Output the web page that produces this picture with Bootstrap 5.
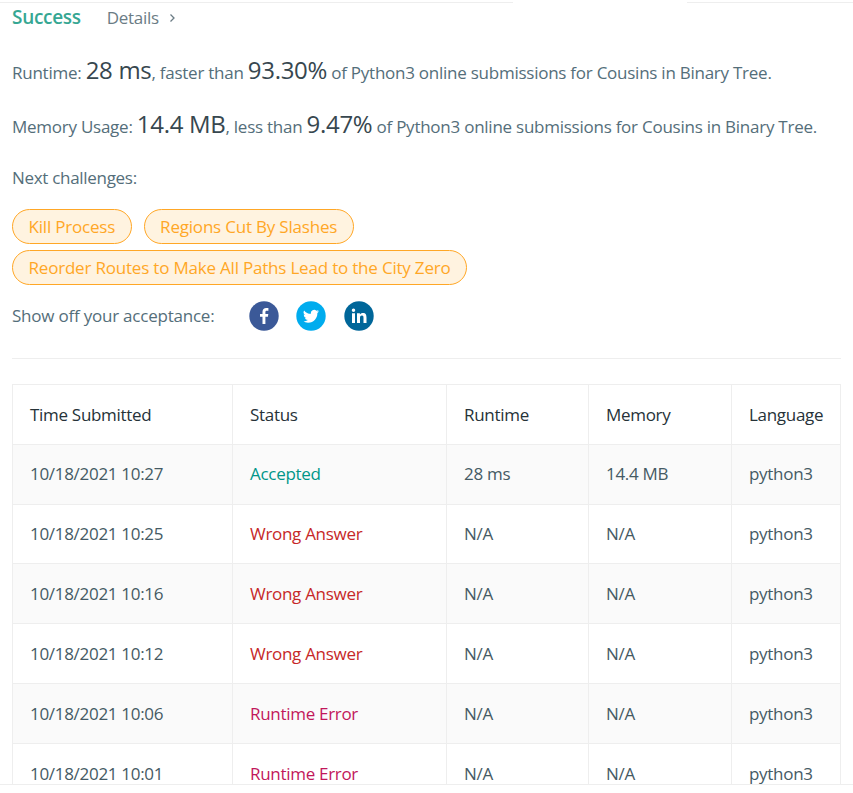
<!DOCTYPE html>
<html lang="en">
<head>
<meta charset="utf-8">
<title>Submission result</title>
<link rel="stylesheet" href="https://cdn.jsdelivr.net/npm/bootstrap@5.3.0/dist/css/bootstrap.min.css">
<style>
html,body{height:100%;overflow:hidden;background:#fff}
body{font-family:"Open Sans","Noto Sans",sans-serif;color:#546e7a;font-size:17px;letter-spacing:-.3px}
.tabline{height:3px;display:flex}
.tabline span{border-top:1px solid #eee;margin-top:2px}
.tl-a{width:513px}.tl-b{width:174px;border-top:0!important}.tl-c{flex:1}
.sheet{height:782px;overflow:hidden;border-bottom:1px solid #eee;padding:0 12px}
.headrow{height:29px;align-items:center;gap:26px}
.succ{color:#36a793;font-weight:600;font-size:19px}
.dets{color:#6b7c85;font-size:17px;gap:10px}
.statline{margin:0;height:54px;line-height:54px;white-space:nowrap;letter-spacing:-.25px}
.statline b{font-weight:400;font-size:24px;color:#37474f;letter-spacing:-.3px}
.statfirst{margin-top:11px}
.nxt{margin:0;height:49px;line-height:49px;margin-top:2px}
.pillwrap{margin-top:7px;row-gap:6px;column-gap:12px;max-width:700px}
.pilla{height:35px;line-height:33px;padding:0 15.5px;border:1px solid #ffa726;border-radius:18px;background:#fff3e0;color:#ffa726;font-size:17px;letter-spacing:-.2px;text-decoration:none;white-space:nowrap}
.sharerow{height:30px;margin-top:16px;align-items:center}
.sharelab{width:237px;letter-spacing:-.22px}
.icons{gap:17px}
.icon-last{margin-left:1px}
.rule{height:1px;background:#eee;margin-top:27px;margin-bottom:25px}
.subs{table-layout:fixed;width:828px;border-collapse:collapse;margin:0;--bs-table-bg:transparent;--bs-table-striped-bg:#fafafa}
.subs th,.subs td{border:1px solid #eee;height:59.83px;padding:0 17px;vertical-align:middle;font-weight:400;color:#455a64;white-space:nowrap;box-shadow:none}
.subs th{color:#263238}
.subs tbody tr:nth-child(odd) td{background:#fafafa}
.subs .acc{color:#009688}
.subs .wa{color:#c62828}
.subs .re{color:#c2185b}
</style>
</head>
<body>
<div class="tabline"><span class="tl-a"></span><span class="tl-b"></span><span class="tl-c"></span></div>
<div class="sheet">
  <div class="d-flex headrow">
    <span class="succ">Success</span>
    <span class="dets d-flex align-items-center">Details
      <svg width="7" height="10" viewBox="0 0 7 10" fill="none" stroke="#6b7c85" stroke-width="1.3"><path d="M1.5 1.5 5 5 1.5 8.5"/></svg>
    </span>
  </div>
  <p class="statline statfirst">Runtime: <b>28 ms</b>, faster than <b>93.30%</b> of Python3 online submissions for Cousins in Binary Tree.</p>
  <p class="statline">Memory Usage: <b>14.4 MB</b>, less than <b>9.47%</b> of Python3 online submissions for Cousins in Binary Tree.</p>
  <p class="nxt">Next challenges:</p>
  <div class="d-flex flex-wrap pillwrap">
    <a class="pilla" href="#">Kill Process</a>
    <a class="pilla" href="#">Regions Cut By Slashes</a>
    <a class="pilla" href="#">Reorder Routes to Make All Paths Lead to the City Zero</a>
  </div>
  <div class="d-flex sharerow">
    <span class="sharelab">Show off your acceptance:</span>
    <div class="d-flex icons">
      <svg width="30" height="30" viewBox="0 0 30 30" role="img" aria-label="Facebook"><circle cx="15" cy="15" r="14.7" fill="#3b5998"/><path fill="#fff" d="M16.4 23v-7.2h2.5l.4-2.9h-2.9v-1.8c0-.8.3-1.4 1.5-1.4h1.5V7.1c-.3 0-1.2-.1-2.2-.1-2.2 0-3.7 1.3-3.7 3.8v2.1h-2.5v2.9h2.5V23z"/></svg>
      <svg width="30" height="30" viewBox="0 0 30 30" role="img" aria-label="Twitter"><circle cx="15" cy="15" r="14.7" fill="#00acee"/><g transform="translate(7 6.8)"><path fill="#fff" d="M5.026 15c6.038 0 9.341-5.003 9.341-9.334 0-.14 0-.282-.006-.422A6.685 6.685 0 0 0 16 3.542a6.658 6.658 0 0 1-1.889.518 3.301 3.301 0 0 0 1.447-1.817 6.533 6.533 0 0 1-2.087.793A3.286 3.286 0 0 0 7.875 6.03a9.325 9.325 0 0 1-6.767-3.429 3.289 3.289 0 0 0 1.018 4.382A3.323 3.323 0 0 1 .64 6.575v.045a3.288 3.288 0 0 0 2.632 3.218 3.203 3.203 0 0 1-.865.115 3.23 3.23 0 0 1-.614-.057 3.283 3.283 0 0 0 3.067 2.277A6.588 6.588 0 0 1 .78 13.58a6.32 6.32 0 0 1-.78-.045A9.344 9.344 0 0 0 5.026 15z"/></g></svg>
      <svg class="icon-last" width="30" height="30" viewBox="0 0 30 30" role="img" aria-label="LinkedIn"><circle cx="15" cy="15" r="14.7" fill="#006699"/><path fill="#fff" d="M8 12.3h3v9.7H8zM9.5 7.6a1.75 1.75 0 1 1 0 3.5 1.75 1.75 0 0 1 0-3.5zM13 12.3h2.9v1.3c.5-.9 1.6-1.6 3-1.6 3 0 3.6 2 3.6 4.6V22h-3v-4.8c0-1.2 0-2.6-1.6-2.6s-1.9 1.2-1.9 2.5V22h-3z"/></svg>
    </div>
  </div>
  <div class="rule"></div>
  <table class="table subs">
    <colgroup><col style="width:220px"><col style="width:214px"><col style="width:142px"><col style="width:143px"><col style="width:109px"></colgroup>
    <thead><tr><th>Time Submitted</th><th>Status</th><th>Runtime</th><th>Memory</th><th>Language</th></tr></thead>
    <tbody>
      <tr><td>10/18/2021 10:27</td><td class="acc">Accepted</td><td>28 ms</td><td>14.4 MB</td><td>python3</td></tr>
      <tr><td>10/18/2021 10:25</td><td class="wa">Wrong Answer</td><td>N/A</td><td>N/A</td><td>python3</td></tr>
      <tr><td>10/18/2021 10:16</td><td class="wa">Wrong Answer</td><td>N/A</td><td>N/A</td><td>python3</td></tr>
      <tr><td>10/18/2021 10:12</td><td class="wa">Wrong Answer</td><td>N/A</td><td>N/A</td><td>python3</td></tr>
      <tr><td>10/18/2021 10:06</td><td class="re">Runtime Error</td><td>N/A</td><td>N/A</td><td>python3</td></tr>
      <tr><td>10/18/2021 10:01</td><td class="re">Runtime Error</td><td>N/A</td><td>N/A</td><td>python3</td></tr>
    </tbody>
  </table>
</div>
<script src="https://cdn.jsdelivr.net/npm/bootstrap@5.3.0/dist/js/bootstrap.bundle.min.js"></script>
</body>
</html>
